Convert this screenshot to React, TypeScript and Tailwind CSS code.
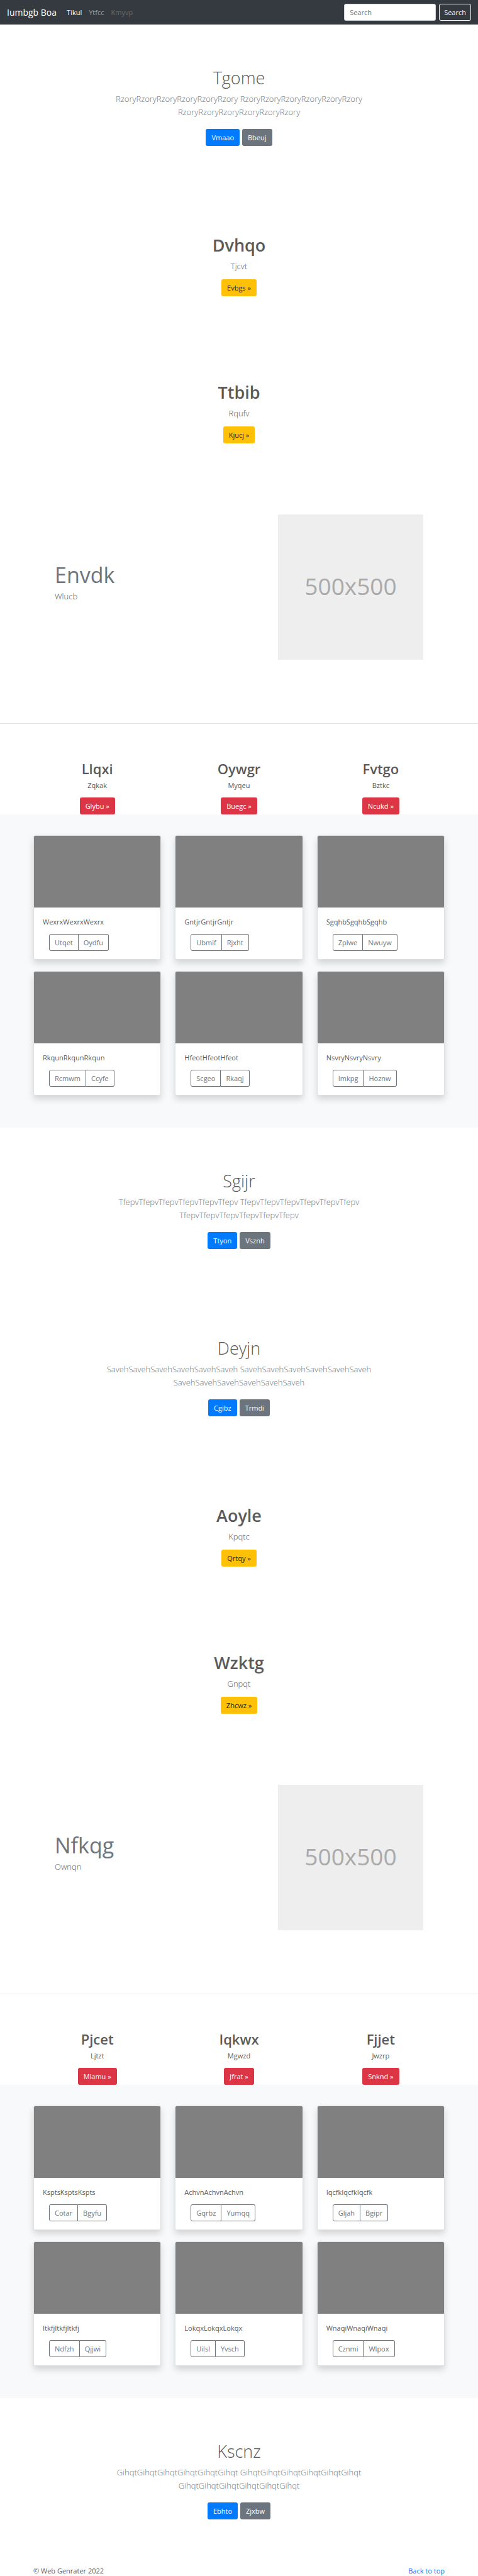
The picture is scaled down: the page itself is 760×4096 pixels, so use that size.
import React from "react";

const sans = "font-['Open_Sans','Noto_Sans',sans-serif]";
const btn = "inline-flex h-[27px] items-center justify-center rounded-[3px] text-[11px] leading-[17px]";

function Nav() {
  return (
    <nav className="flex h-[39px] items-center bg-[#343a40] px-[11px]">
      <a href="#" className="mr-[16px] text-[14px] leading-[21px] text-white">Iumbgb Boa</a>
      <ul className="flex flex-1 gap-[11px] text-[11px] leading-[17px]">
        <li><a href="#" className="text-white">Tikul</a></li>
        <li><a href="#" className="text-white/50">Ytfcc</a></li>
        <li><a href="#" aria-disabled="true" className="text-white/25">Kmyvp</a></li>
      </ul>
      <form className="flex gap-[5px]" onSubmit={(e) => e.preventDefault()}>
        <input
          type="search"
          aria-label="Search"
          placeholder="Search"
          className="h-[27px] w-[146px] rounded-[3px] border border-[#ced4da] bg-white px-[8px] text-[11px] text-[#495057] placeholder:text-[#6c757d]"
        />
        <button type="submit" className={`${btn} border border-[#f8f9fa] px-[7px] text-[#f8f9fa]`}>Search</button>
      </form>
    </nav>
  );
}

function Hero({ title, word, primary, secondary }: { title: string; word: string; primary: string; secondary: string }) {
  const long = word.repeat(6);
  return (
    <section className="px-[53px] pt-[67px] pb-[73px] text-center">
      <h1 className="mb-[5px] text-[27px] leading-[36px] font-light">{title}</h1>
      <p className="mx-auto mb-[16px] max-w-[500px] text-[13px] leading-[21px] font-light text-[#6c757d]">
        {long} {long} {long}
      </p>
      <div className="flex justify-center gap-[4px]">
        <a href="#" className={`${btn} bg-[#007bff] px-[9px] text-white`}>{primary}</a>
        <a href="#" className={`${btn} bg-[#6c757d] px-[9px] text-white`}>{secondary}</a>
      </div>
    </section>
  );
}

function Callout({ title, text, action }: { title: string; text: string; action: string }) {
  return (
    <section className="flex flex-col items-center px-[53px] pt-[67px] pb-[68px] text-center">
      <h1 className="mb-[5px] text-[27px] leading-[36px] font-semibold">{title}</h1>
      <p className="mb-[10px] text-[13px] leading-[21px] font-light">{text}</p>
      <a href="#" className={`${btn} bg-[#ffc107] px-[9px] text-[#212529]`}>{action} »</a>
    </section>
  );
}

function Featurette({ title, text }: { title: string; text: string }) {
  return (
    <section className="flex items-start justify-between border-b border-[#e5e5e5] px-[87px] pt-[45px] pb-[101px]">
      <div className="pt-[79px]">
        <h2 className="mb-[6px] text-[34px] leading-[35px] text-[#6c757d]">{title}</h2>
        <p className="text-[13px] leading-[21px] font-light">{text}</p>
      </div>
      <div className="flex aspect-square w-[231px] items-center justify-center bg-[#eeeeee] pb-[4px] text-[37px] leading-[48px] text-[#aaaaaa]">
        500x500
      </div>
    </section>
  );
}

function Columns({ items }: { items: string[][] }) {
  return (
    <section className="grid grid-cols-3 gap-x-[22px] px-[53px] pt-[56px]">
      {items.map(([title, text, action]) => (
        <div key={title} className="flex flex-col items-center text-center">
          <h2 className="mb-[3px] text-[22px] leading-[30px] font-semibold">{title}</h2>
          <p className="mb-[11px] text-[11px] leading-[17px]">{text}</p>
          <a href="#" className={`${btn} bg-[#dc3545] px-[9px] text-white`}>{action} »</a>
        </div>
      ))}
    </section>
  );
}

function Album({ items }: { items: string[][] }) {
  const outline = "h-[27px] border border-[#6c757d] px-[8px] text-[11px] leading-[17px] text-[#6c757d]";
  return (
    <section className="grid grid-cols-3 gap-x-[22px] gap-y-[18px] bg-[#f8f9fb] px-[53px] pt-[33px] pb-[51px]">
      {items.map(([word, left, right]) => (
        <article key={word} className="overflow-hidden rounded-[3px] border border-[#dfe0e1] bg-white shadow-[0_6px_11px_rgba(0,0,0,0.15)]">
          <div className="h-[114px] bg-[#808080]" />
          <div className="px-[14px] pt-[14px] pb-[13px]">
            <p className="mb-[11px] text-[11px] leading-[17px]">{word.repeat(3)}</p>
            <div className="flex pl-[10px]">
              <button type="button" className={`${outline} rounded-l-[3px]`}>{left}</button>
              <button type="button" className={`${outline} rounded-r-[3px] border-l-0`}>{right}</button>
            </div>
          </div>
        </article>
      ))}
    </section>
  );
}

export default function App() {
  return (
    <div className={`${sans} bg-white text-[11px] leading-[17px] text-[#5a5a5a]`}>
      <Nav />
      <main>
        <Hero title="Tgome" word="Rzory" primary="Vmaao" secondary="Bbeuj" />
        <Callout title="Dvhqo" text="Tjcvt" action="Evbgs" />
        <Callout title="Ttbib" text="Rqufv" action="Kjucj" />
        <Featurette title="Envdk" text="Wlucb" />
        <Columns
          items={[
            ["Llqxi", "Zqkak", "Glybu"],
            ["Oywgr", "Myqeu", "Buegc"],
            ["Fvtgo", "Bztkc", "Ncukd"],
          ]}
        />
        <Album
          items={[
            ["Wexrx", "Utqet", "Oydfu"],
            ["Gntjr", "Ubmif", "Rjxht"],
            ["Sgqhb", "Zplwe", "Nwuyw"],
            ["Rkqun", "Rcmwm", "Ccyfe"],
            ["Hfeot", "Scgeo", "Rkaqj"],
            ["Nsvry", "Imkpg", "Hoznw"],
          ]}
        />
        <Hero title="Sgijr" word="Tfepv" primary="Ttyon" secondary="Vsznh" />
        <Hero title="Deyjn" word="Saveh" primary="Cgibz" secondary="Trmdi" />
        <Callout title="Aoyle" text="Kpqtc" action="Qrtqy" />
        <Callout title="Wzktg" text="Gnpqt" action="Zhcwz" />
        <Featurette title="Nfkqg" text="Ownqn" />
        <Columns
          items={[
            ["Pjcet", "Ljtzt", "Mlamu"],
            ["Iqkwx", "Mgwzd", "Jfrat"],
            ["Fjjet", "Jwzrp", "Snknd"],
          ]}
        />
        <Album
          items={[
            ["Kspts", "Cotar", "Bgyfu"],
            ["Achvn", "Gqrbz", "Yumqq"],
            ["Iqcfk", "Gljah", "Bgipr"],
            ["Itkfj", "Ndfzh", "Qjjwi"],
            ["Lokqx", "Uilsl", "Yvsch"],
            ["Wnaqi", "Cznmi", "Wlpox"],
          ]}
        />
        <Hero title="Kscnz" word="Gihqt" primary="Ebhto" secondary="Zjxbw" />
      </main>
      <footer className="flex justify-between px-[53px]">
        <p>© Web Genrater 2022</p>
        <a href="#" className="text-[#007bff]">Back to top</a>
      </footer>
    </div>
  );
}
